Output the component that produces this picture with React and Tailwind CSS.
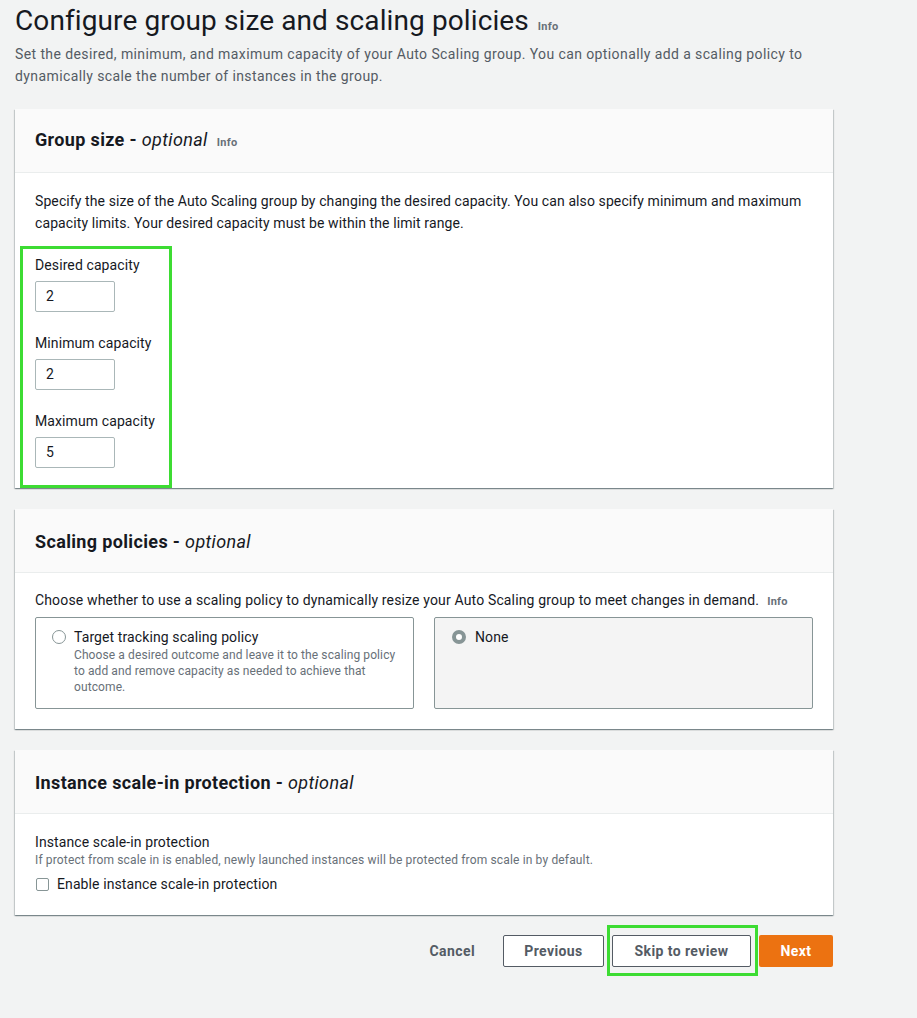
import React from "react";

const shadow =
  "shadow-[0_1px_1px_0_rgba(0,28,36,0.3),1px_1px_1px_0_rgba(0,28,36,0.15),-1px_1px_1px_0_rgba(0,28,36,0.15)]";

function PanelHeader({ title, info }) {
  return (
    <div className="h-[64px] bg-[#fafafa] border-b border-[#eaeded] flex items-center px-5">
      <h2 className="mt-[2px] flex items-baseline text-[18px] leading-[24px] text-[#16191f] tracking-[0.35px]">
        <span className="font-bold whitespace-pre">{title} - </span>
        <span className="italic">optional</span>
        {info && (
          <span className="ml-[9px] text-[11px] font-bold text-[#687078] tracking-[0.3px]">Info</span>
        )}
      </h2>
    </div>
  );
}

function Field({ label, value, first }) {
  return (
    <div className={first ? "" : "mt-[21px]"}>
      <div className="text-[14px] leading-[20px] text-[#16191f]">{label}</div>
      <div className="mt-[6px] w-[80px] h-[31px] border border-[#aab7b8] rounded-[2px] bg-white flex items-center pl-[10px] text-[14px] text-[#16191f]">
        {value}
      </div>
    </div>
  );
}

export default function App() {
  return (
    <div
      className="w-[917px] h-[1018px] bg-[#f2f3f3] px-[15px] overflow-hidden tracking-[0.1px]"
      style={{ fontFamily: "Roboto, 'Open Sans', sans-serif" }}
    >
      <div className="w-[818px]">
        <h1 className="mt-[3px] h-[36px] flex items-baseline text-[28px] leading-[36px] text-[#16191f] font-normal tracking-[0.1px]">
          Configure group size and scaling policies
          <span className="ml-[9px] text-[11px] font-bold text-[#687078] tracking-[0.3px]">Info</span>
        </h1>
        <p className="mt-[4px] text-[14px] leading-[22px] text-[#545b64] tracking-[0.4px]">
          Set the desired, minimum, and maximum capacity of your Auto Scaling group. You can optionally add a scaling policy to dynamically scale the number of instances in the group.
        </p>

        {/* Group size */}
        <div className={`mt-[22px] bg-white ${shadow}`}>
          <PanelHeader title="Group size" info />
          <div className="pt-[17px] px-5">
            <p className="text-[14px] leading-[22px] text-[#16191f] tracking-[0.1px]">
              Specify the size of the Auto Scaling group by changing the desired capacity. You can also specify minimum and maximum capacity limits. Your desired capacity must be within the limit range.
            </p>
            <div className="mt-[12px] -ml-[15px] w-[152px] border-[3px] border-[#3ddc33] pl-[12px] pt-[6px] pb-[17px]">
              <Field label="Desired capacity" value="2" first />
              <Field label="Minimum capacity" value="2" />
              <Field label="Maximum capacity" value="5" />
            </div>
          </div>
        </div>

        {/* Scaling policies */}
        <div className={`mt-[21px] bg-white ${shadow}`}>
          <PanelHeader title="Scaling policies" />
          <div className="pt-[17px] px-5 pb-[20px]">
            <p className="text-[14px] leading-[20px] text-[#16191f] tracking-[0.15px]">
              Choose whether to use a scaling policy to dynamically resize your Auto Scaling group to meet changes in demand.
              <span className="ml-[8px] text-[11px] font-bold text-[#687078] tracking-[0.3px]">Info</span>
            </p>
            <div className="mt-[5px] grid grid-cols-2 gap-5">
              <div className="h-[92px] border border-[#879596] rounded-[2px] pl-[16px] pr-[8px] pt-[9px] flex gap-[8px]">
                <span className="mt-[3px] w-[14px] h-[14px] rounded-full border border-[#879596] bg-white shrink-0" />
                <div>
                  <div className="text-[14px] leading-[20px] text-[#16191f]">Target tracking scaling policy</div>
                  <div className="text-[12px] leading-[16px] text-[#687078] tracking-[0.1px]">
                    Choose a desired outcome and leave it to the scaling policy to add and remove capacity as needed to achieve that outcome.
                  </div>
                </div>
              </div>
              <div className="h-[92px] border border-[#879596] rounded-[2px] bg-[#f4f4f4] pl-[17px] pt-[9px] flex gap-[9px]">
                <span className="mt-[3px] w-[14px] h-[14px] rounded-full border-[4px] border-[#879596] bg-white shrink-0" />
                <div className="text-[14px] leading-[20px] text-[#16191f]">None</div>
              </div>
            </div>
          </div>
        </div>

        {/* Instance scale-in protection */}
        <div className={`mt-[21px] bg-white ${shadow}`}>
          <PanelHeader title="Instance scale-in protection" />
          <div className="pt-[18px] px-5 pb-[21px]">
            <div className="text-[14px] leading-[20px] text-[#16191f]">Instance scale-in protection</div>
            <div className="text-[12px] leading-[16px] text-[#687078] tracking-[0.15px]">
              If protect from scale in is enabled, newly launched instances will be protected from scale in by default.
            </div>
            <div className="mt-[6px] flex items-center gap-[8px]">
              <span className="ml-[1px] w-[13px] h-[13px] border border-[#879596] rounded-[2px] bg-white" />
              <span className="text-[14px] leading-[20px] text-[#16191f]">Enable instance scale-in protection</span>
            </div>
          </div>
        </div>

        {/* Buttons */}
        <div className="mt-[20px] flex justify-end items-center gap-[8px]">
          <button className="h-[32px] px-[20px] text-[14px] font-bold text-[#545b64] tracking-[0.4px]">Cancel</button>
          <button className="h-[32px] w-[101px] border border-[#545b64] rounded-[2px] bg-white text-[14px] font-bold text-[#545b64] tracking-[0.4px]">
            Previous
          </button>
          <div className="relative">
            <button className="h-[32px] w-[139px] border border-[#545b64] rounded-[2px] bg-white text-[14px] font-bold text-[#545b64] tracking-[0.4px]">
              Skip to review
            </button>
            <div className="absolute -left-[5px] -right-[7px] -top-[10px] -bottom-[9px] border-[3px] border-[#3ddc33] pointer-events-none" />
          </div>
          <button className="h-[32px] w-[74px] rounded-[2px] bg-[#ec7211] text-[14px] font-bold text-white tracking-[0.4px]">
            Next
          </button>
        </div>
      </div>
    </div>
  );
}
